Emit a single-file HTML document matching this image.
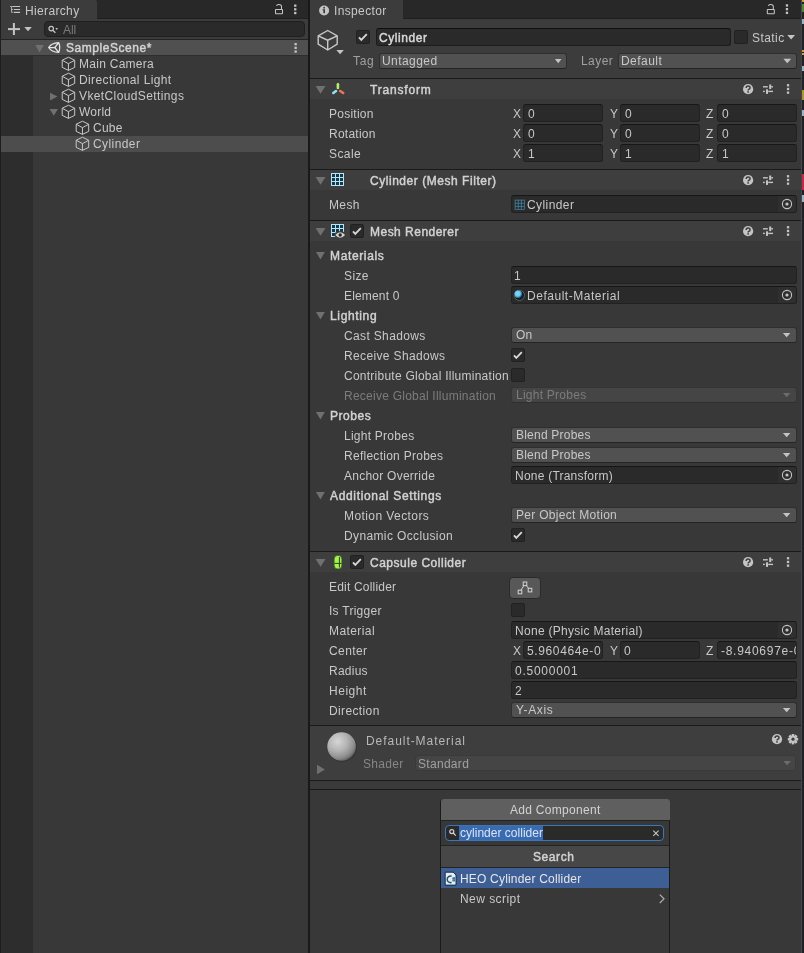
<!DOCTYPE html>
<html><head><meta charset="utf-8"><style>
html,body{margin:0;padding:0;width:804px;height:953px;overflow:hidden;background:#383838}
body>div,body>svg{position:absolute}
div div{position:absolute}
.t{position:absolute;will-change:transform;font-family:"Liberation Sans",sans-serif;font-size:12px;line-height:16px;white-space:pre}
</style></head><body>
<div style="left:0px;top:0px;width:804px;height:953px;background:#383838;"></div>
<div style="left:0px;top:0px;width:308px;height:19px;background:#282828;"></div>
<div style="left:1px;top:0px;width:96px;height:19px;background:#3c3c3c;border-radius:0 2px 0 0"></div>
<div style="left:0px;top:19px;width:308px;height:934px;background:#383838;"></div>
<div style="left:0px;top:0px;width:1px;height:953px;background:#1e1e1e;"></div>
<div style="left:1px;top:56px;width:32px;height:897px;background:#2d2d2d;"></div>
<div style="left:1px;top:19px;width:307px;height:21px;background:#3c3c3c;"></div>
<div style="left:97px;top:18px;width:211px;height:1px;background:#1f1f1f;"></div>
<div style="left:0px;top:39px;width:308px;height:1px;background:#232323;"></div>
<div style="left:44px;top:21px;width:261px;height:16px;background:#2a2a2a;border:1px solid #1f1f1f;border-radius:4px;box-sizing:border-box"></div>
<div class="t" style="left:62.9px;top:21.5px;letter-spacing:-0.1px;color:#7a7a7a;">All</div>
<div style="left:1px;top:40px;width:307px;height:15px;background:#505050;"></div>
<div style="left:1px;top:55px;width:307px;height:1px;background:#2e2e2e;"></div>
<div style="left:1px;top:136px;width:307px;height:16px;background:#4d4d4d;"></div>
<div class="t" style="left:25.0px;top:3px;letter-spacing:0.35px;color:#c8c8c8;">Hierarchy</div>
<div class="t" style="left:65.8px;top:40.2px;letter-spacing:0.55px;color:#d2d2d2;-webkit-text-stroke:0.45px #d2d2d2;">SampleScene*</div>
<div class="t" style="left:79.0px;top:56px;letter-spacing:0.27px;color:#c8c8c8;">Main Camera</div>
<div class="t" style="left:79.0px;top:72px;letter-spacing:0.385px;color:#c8c8c8;">Directional Light</div>
<div class="t" style="left:79.0px;top:88px;letter-spacing:0.386px;color:#c8c8c8;">VketCloudSettings</div>
<div class="t" style="left:79.0px;top:104px;letter-spacing:0.215px;color:#c8c8c8;">World</div>
<div class="t" style="left:93.0px;top:120px;letter-spacing:0.25px;color:#c8c8c8;">Cube</div>
<div class="t" style="left:93.0px;top:136px;letter-spacing:0.41px;color:#c8c8c8;">Cylinder</div>
<div style="left:308px;top:0px;width:2px;height:953px;background:#191919;"></div>
<div style="left:310px;top:0px;width:491px;height:19px;background:#282828;"></div>
<div style="left:310px;top:0px;width:93px;height:19px;background:#3c3c3c;"></div>
<div style="left:403px;top:0px;width:398px;height:18px;background:#282828;"></div>
<div style="left:310px;top:19px;width:491px;height:934px;background:#383838;"></div>
<div style="left:310px;top:19px;width:491px;height:59px;background:#3c3c3c;"></div>
<div style="left:403px;top:18px;width:398px;height:1px;background:#1f1f1f;"></div>
<div class="t" style="left:333.7px;top:3px;letter-spacing:0.36px;color:#c8c8c8;">Inspector</div>
<div style="left:801px;top:0px;width:1px;height:953px;background:#474747;"></div>
<div style="left:802px;top:0px;width:2px;height:953px;background:#1f2124;"></div>
<div style="left:802px;top:0px;width:2px;height:2px;background:#c8a040;"></div>
<div style="left:802px;top:4px;width:2px;height:8px;background:#4c8a3c;"></div>
<div style="left:802px;top:19px;width:2px;height:5px;background:#9ab4c4;"></div>
<div style="left:802px;top:50px;width:2px;height:1.5px;background:#c8a040;"></div>
<div style="left:802px;top:53px;width:2px;height:1.5px;background:#c8a040;"></div>
<div style="left:802px;top:66px;width:2px;height:5px;background:#9ab4c4;"></div>
<div style="left:802px;top:90px;width:2px;height:10px;background:#a89a30;"></div>
<div style="left:802px;top:110px;width:2px;height:6px;background:#9ab4c4;"></div>
<div style="left:802px;top:174px;width:2px;height:16px;background:#c8284a;"></div>
<div style="left:802px;top:195px;width:2px;height:7px;background:#9ab4c4;"></div>
<div style="left:356px;top:30px;width:14px;height:14px;background:#2a2a2a;border:1px solid #212121;border-radius:2px;box-sizing:border-box"></div>
<div style="left:376px;top:28px;width:355px;height:18px;background:#2a2a2a;border:1px solid #1c1c1c;border-top-color:#101010;border-radius:3px;box-sizing:border-box"></div>
<div class="t" style="left:378.90000000000003px;top:30px;letter-spacing:0.57px;color:#d8d8d8;-webkit-text-stroke:0.45px #d8d8d8;">Cylinder</div>
<div style="left:734px;top:30px;width:14px;height:14px;background:#2a2a2a;border:1px solid #212121;border-radius:2px;box-sizing:border-box"></div>
<div class="t" style="left:751.9px;top:29.799999999999997px;letter-spacing:0.43px;color:#c8c8c8;">Static</div>
<div class="t" style="left:352.7px;top:53px;letter-spacing:0.7px;color:#a0a0a0;">Tag</div>
<div style="left:379px;top:53px;width:188px;height:16px;background:#515151;border:1px solid #2e2e2e;border-bottom-color:#242424;border-radius:3px;box-sizing:border-box"></div>
<div class="t" style="left:381.8px;top:53px;letter-spacing:0.43px;color:#c8c8c8;">Untagged</div>
<div class="t" style="left:580.9px;top:53px;letter-spacing:0.43px;color:#a0a0a0;">Layer</div>
<div style="left:618px;top:53px;width:179px;height:16px;background:#515151;border:1px solid #2e2e2e;border-bottom-color:#242424;border-radius:3px;box-sizing:border-box"></div>
<div class="t" style="left:621.1px;top:53px;letter-spacing:0.45px;color:#c8c8c8;">Default</div>
<div style="left:310px;top:78px;width:491px;height:1px;background:#1a1a1a;"></div>
<div style="left:310px;top:79px;width:491px;height:20px;background:#3e3e3e;"></div>
<div class="t" style="left:369.90000000000003px;top:82px;letter-spacing:0.82px;color:#d2d2d2;-webkit-text-stroke:0.45px #d2d2d2;">Transform</div>
<div class="t" style="left:329.1px;top:106px;letter-spacing:0.25px;color:#c8c8c8;">Position</div>
<div class="t" style="left:512.7px;top:106px;letter-spacing:0px;color:#c8c8c8;">X</div>
<div style="left:523px;top:104px;width:80px;height:18px;background:#2a2a2a;border:1px solid #212121;border-top-color:#171717;border-radius:3px;box-sizing:border-box"></div>
<div class="t" style="left:527.7px;top:106px;letter-spacing:0px;color:#c8c8c8;">0</div>
<div class="t" style="left:609.6px;top:106px;letter-spacing:0px;color:#c8c8c8;">Y</div>
<div style="left:620px;top:104px;width:80px;height:18px;background:#2a2a2a;border:1px solid #212121;border-top-color:#171717;border-radius:3px;box-sizing:border-box"></div>
<div class="t" style="left:624.7px;top:106px;letter-spacing:0px;color:#c8c8c8;">0</div>
<div class="t" style="left:705.8px;top:106px;letter-spacing:0px;color:#c8c8c8;">Z</div>
<div style="left:717px;top:104px;width:80px;height:18px;background:#2a2a2a;border:1px solid #212121;border-top-color:#171717;border-radius:3px;box-sizing:border-box"></div>
<div class="t" style="left:721.7px;top:106px;letter-spacing:0px;color:#c8c8c8;">0</div>
<div class="t" style="left:329.1px;top:126px;letter-spacing:0.25px;color:#c8c8c8;">Rotation</div>
<div class="t" style="left:512.7px;top:126px;letter-spacing:0px;color:#c8c8c8;">X</div>
<div style="left:523px;top:124px;width:80px;height:18px;background:#2a2a2a;border:1px solid #212121;border-top-color:#171717;border-radius:3px;box-sizing:border-box"></div>
<div class="t" style="left:527.7px;top:126px;letter-spacing:0px;color:#c8c8c8;">0</div>
<div class="t" style="left:609.6px;top:126px;letter-spacing:0px;color:#c8c8c8;">Y</div>
<div style="left:620px;top:124px;width:80px;height:18px;background:#2a2a2a;border:1px solid #212121;border-top-color:#171717;border-radius:3px;box-sizing:border-box"></div>
<div class="t" style="left:624.7px;top:126px;letter-spacing:0px;color:#c8c8c8;">0</div>
<div class="t" style="left:705.8px;top:126px;letter-spacing:0px;color:#c8c8c8;">Z</div>
<div style="left:717px;top:124px;width:80px;height:18px;background:#2a2a2a;border:1px solid #212121;border-top-color:#171717;border-radius:3px;box-sizing:border-box"></div>
<div class="t" style="left:721.7px;top:126px;letter-spacing:0px;color:#c8c8c8;">0</div>
<div class="t" style="left:329.1px;top:146px;letter-spacing:0.434px;color:#c8c8c8;">Scale</div>
<div class="t" style="left:512.7px;top:146px;letter-spacing:0px;color:#c8c8c8;">X</div>
<div style="left:523px;top:144px;width:80px;height:18px;background:#2a2a2a;border:1px solid #212121;border-top-color:#171717;border-radius:3px;box-sizing:border-box"></div>
<div class="t" style="left:527.7px;top:146px;letter-spacing:0px;color:#c8c8c8;">1</div>
<div class="t" style="left:609.6px;top:146px;letter-spacing:0px;color:#c8c8c8;">Y</div>
<div style="left:620px;top:144px;width:80px;height:18px;background:#2a2a2a;border:1px solid #212121;border-top-color:#171717;border-radius:3px;box-sizing:border-box"></div>
<div class="t" style="left:624.7px;top:146px;letter-spacing:0px;color:#c8c8c8;">1</div>
<div class="t" style="left:705.8px;top:146px;letter-spacing:0px;color:#c8c8c8;">Z</div>
<div style="left:717px;top:144px;width:80px;height:18px;background:#2a2a2a;border:1px solid #212121;border-top-color:#171717;border-radius:3px;box-sizing:border-box"></div>
<div class="t" style="left:721.7px;top:146px;letter-spacing:0px;color:#c8c8c8;">1</div>
<div style="left:310px;top:169px;width:491px;height:1px;background:#1a1a1a;"></div>
<div style="left:310px;top:170px;width:491px;height:20px;background:#3e3e3e;"></div>
<div class="t" style="left:369.90000000000003px;top:173px;letter-spacing:0.54px;color:#d2d2d2;-webkit-text-stroke:0.45px #d2d2d2;">Cylinder (Mesh Filter)</div>
<div class="t" style="left:329.1px;top:197px;letter-spacing:0.36px;color:#c8c8c8;">Mesh</div>
<div style="left:511px;top:195px;width:286px;height:18px;background:#2a2a2a;border:1px solid #212121;border-top-color:#171717;border-radius:3px;box-sizing:border-box"></div>
<div style="left:777.5px;top:196px;width:18.5px;height:16px;background:#2f2f2f;border-radius:0 2px 2px 0"></div>
<div class="t" style="left:526.9px;top:197px;letter-spacing:0.41px;color:#c8c8c8;">Cylinder</div>
<div style="left:310px;top:220px;width:491px;height:1px;background:#1a1a1a;"></div>
<div style="left:310px;top:221px;width:491px;height:20px;background:#3e3e3e;"></div>
<div class="t" style="left:369.90000000000003px;top:224px;letter-spacing:0.48px;color:#d2d2d2;-webkit-text-stroke:0.45px #d2d2d2;">Mesh Renderer</div>
<div style="left:350px;top:224px;width:14px;height:14px;background:#2a2a2a;border:1px solid #212121;border-radius:2px;box-sizing:border-box"></div>
<div class="t" style="left:330.20000000000005px;top:248px;letter-spacing:0.64px;color:#d2d2d2;-webkit-text-stroke:0.45px #d2d2d2;">Materials</div>
<div class="t" style="left:343.9px;top:268px;letter-spacing:0.389px;color:#c8c8c8;">Size</div>
<div class="t" style="left:343.9px;top:288px;letter-spacing:0.163px;color:#c8c8c8;">Element 0</div>
<div class="t" style="left:330.20000000000005px;top:308px;letter-spacing:0.65px;color:#d2d2d2;-webkit-text-stroke:0.45px #d2d2d2;">Lighting</div>
<div class="t" style="left:343.9px;top:328px;letter-spacing:0.352px;color:#c8c8c8;">Cast Shadows</div>
<div class="t" style="left:343.9px;top:348px;letter-spacing:0.362px;color:#c8c8c8;">Receive Shadows</div>
<div class="t" style="left:343.9px;top:368px;letter-spacing:0.249px;color:#c8c8c8;">Contribute Global Illumination</div>
<div class="t" style="left:343.9px;top:388px;letter-spacing:0.244px;color:#7c7c7c;">Receive Global Illumination</div>
<div class="t" style="left:330.20000000000005px;top:408px;letter-spacing:0.55px;color:#d2d2d2;-webkit-text-stroke:0.45px #d2d2d2;">Probes</div>
<div class="t" style="left:343.9px;top:428px;letter-spacing:0.251px;color:#c8c8c8;">Light Probes</div>
<div class="t" style="left:343.9px;top:448px;letter-spacing:0.269px;color:#c8c8c8;">Reflection Probes</div>
<div class="t" style="left:343.9px;top:468px;letter-spacing:0.248px;color:#c8c8c8;">Anchor Override</div>
<div class="t" style="left:330.20000000000005px;top:488px;letter-spacing:0.66px;color:#d2d2d2;-webkit-text-stroke:0.45px #d2d2d2;">Additional Settings</div>
<div class="t" style="left:343.9px;top:508px;letter-spacing:0.423px;color:#c8c8c8;">Motion Vectors</div>
<div class="t" style="left:343.9px;top:528px;letter-spacing:0.37px;color:#c8c8c8;">Dynamic Occlusion</div>
<div style="left:511px;top:266px;width:286px;height:18px;background:#2a2a2a;border:1px solid #212121;border-top-color:#171717;border-radius:3px;box-sizing:border-box"></div>
<div class="t" style="left:514.3px;top:268px;letter-spacing:0px;color:#c8c8c8;">1</div>
<div style="left:511px;top:286px;width:286px;height:18px;background:#2a2a2a;border:1px solid #212121;border-top-color:#171717;border-radius:3px;box-sizing:border-box"></div>
<div style="left:777.5px;top:287px;width:18.5px;height:16px;background:#2f2f2f;border-radius:0 2px 2px 0"></div>
<div class="t" style="left:526.9px;top:288px;letter-spacing:0.525px;color:#c8c8c8;">Default-Material</div>
<div style="left:511px;top:327px;width:286px;height:16px;background:#515151;border:1px solid #2e2e2e;border-bottom-color:#242424;border-radius:3px;box-sizing:border-box"></div>
<div class="t" style="left:515.8px;top:327px;letter-spacing:0.092px;color:#c8c8c8;">On</div>
<div style="left:511px;top:348px;width:14px;height:14px;background:#2a2a2a;border:1px solid #212121;border-radius:2px;box-sizing:border-box"></div>
<div style="left:511px;top:368px;width:14px;height:14px;background:#2a2a2a;border:1px solid #212121;border-radius:2px;box-sizing:border-box"></div>
<div style="left:511px;top:387px;width:286px;height:16px;background:#454545;border:1px solid #353535;border-bottom-color:#2e2e2e;border-radius:3px;box-sizing:border-box"></div>
<div class="t" style="left:515.8px;top:387px;letter-spacing:0.251px;color:#7c7c7c;">Light Probes</div>
<div style="left:511px;top:427px;width:286px;height:16px;background:#515151;border:1px solid #2e2e2e;border-bottom-color:#242424;border-radius:3px;box-sizing:border-box"></div>
<div class="t" style="left:515.8px;top:427px;letter-spacing:0.221px;color:#c8c8c8;">Blend Probes</div>
<div style="left:511px;top:447px;width:286px;height:16px;background:#515151;border:1px solid #2e2e2e;border-bottom-color:#242424;border-radius:3px;box-sizing:border-box"></div>
<div class="t" style="left:515.8px;top:447px;letter-spacing:0.221px;color:#c8c8c8;">Blend Probes</div>
<div style="left:511px;top:466px;width:286px;height:18px;background:#2a2a2a;border:1px solid #212121;border-top-color:#171717;border-radius:3px;box-sizing:border-box"></div>
<div style="left:777.5px;top:467px;width:18.5px;height:16px;background:#2f2f2f;border-radius:0 2px 2px 0"></div>
<div class="t" style="left:514.9px;top:468px;letter-spacing:0.228px;color:#c8c8c8;">None (Transform)</div>
<div style="left:511px;top:507px;width:286px;height:16px;background:#515151;border:1px solid #2e2e2e;border-bottom-color:#242424;border-radius:3px;box-sizing:border-box"></div>
<div class="t" style="left:515.8px;top:507px;letter-spacing:0.297px;color:#c8c8c8;">Per Object Motion</div>
<div style="left:511px;top:528px;width:14px;height:14px;background:#2a2a2a;border:1px solid #212121;border-radius:2px;box-sizing:border-box"></div>
<div style="left:310px;top:551px;width:491px;height:1px;background:#1a1a1a;"></div>
<div style="left:310px;top:552px;width:491px;height:20px;background:#3e3e3e;"></div>
<div class="t" style="left:369.90000000000003px;top:555px;letter-spacing:0.51px;color:#d2d2d2;-webkit-text-stroke:0.45px #d2d2d2;">Capsule Collider</div>
<div style="left:350px;top:555px;width:14px;height:14px;background:#2a2a2a;border:1px solid #212121;border-radius:2px;box-sizing:border-box"></div>
<div class="t" style="left:328.9px;top:579px;letter-spacing:0.192px;color:#c8c8c8;">Edit Collider</div>
<div style="left:509px;top:577px;width:32px;height:22px;background:#585858;border:1px solid #2a2a2a;border-radius:4px;box-sizing:border-box"></div>
<div class="t" style="left:328.9px;top:603px;letter-spacing:0.268px;color:#c8c8c8;">Is Trigger</div>
<div style="left:511px;top:603px;width:14px;height:14px;background:#2a2a2a;border:1px solid #212121;border-radius:2px;box-sizing:border-box"></div>
<div class="t" style="left:328.9px;top:623px;letter-spacing:0.414px;color:#c8c8c8;">Material</div>
<div style="left:511px;top:621px;width:286px;height:18px;background:#2a2a2a;border:1px solid #212121;border-top-color:#171717;border-radius:3px;box-sizing:border-box"></div>
<div style="left:777.5px;top:622px;width:18.5px;height:16px;background:#2f2f2f;border-radius:0 2px 2px 0"></div>
<div class="t" style="left:514.9px;top:623px;letter-spacing:0.288px;color:#c8c8c8;">None (Physic Material)</div>
<div class="t" style="left:328.9px;top:643px;letter-spacing:0.395px;color:#c8c8c8;">Center</div>
<div class="t" style="left:513.1px;top:643px;letter-spacing:0px;color:#c8c8c8;">X</div>
<div style="left:523px;top:641px;width:80px;height:18px;background:#2a2a2a;border:1px solid #212121;border-top-color:#171717;border-radius:3px;box-sizing:border-box"></div>
<div style="left:524px;top:641px;width:78px;height:18px;overflow:hidden">
<div class="t" style="left:3.0px;top:2px;letter-spacing:0.62px;color:#c8c8c8">5.960464e-0</div></div>
<div class="t" style="left:610.0px;top:643px;letter-spacing:0px;color:#c8c8c8;">Y</div>
<div style="left:620px;top:641px;width:80px;height:18px;background:#2a2a2a;border:1px solid #212121;border-top-color:#171717;border-radius:3px;box-sizing:border-box"></div>
<div style="left:621px;top:641px;width:78px;height:18px;overflow:hidden">
<div class="t" style="left:3.0px;top:2px;letter-spacing:0.72px;color:#c8c8c8">0</div></div>
<div class="t" style="left:705.8px;top:643px;letter-spacing:0px;color:#c8c8c8;">Z</div>
<div style="left:717px;top:641px;width:80px;height:18px;background:#2a2a2a;border:1px solid #212121;border-top-color:#171717;border-radius:3px;box-sizing:border-box"></div>
<div style="left:718px;top:641px;width:78px;height:18px;overflow:hidden">
<div class="t" style="left:2.6px;top:2px;letter-spacing:0.72px;color:#c8c8c8">-8.940697e-0</div></div>
<div class="t" style="left:328.9px;top:663px;letter-spacing:0.24px;color:#c8c8c8;">Radius</div>
<div style="left:511px;top:661px;width:286px;height:18px;background:#2a2a2a;border:1px solid #212121;border-top-color:#171717;border-radius:3px;box-sizing:border-box"></div>
<div class="t" style="left:514.7px;top:663px;letter-spacing:0.74px;color:#c8c8c8;">0.5000001</div>
<div class="t" style="left:328.9px;top:683px;letter-spacing:0.519px;color:#c8c8c8;">Height</div>
<div style="left:511px;top:681px;width:286px;height:18px;background:#2a2a2a;border:1px solid #212121;border-top-color:#171717;border-radius:3px;box-sizing:border-box"></div>
<div class="t" style="left:514.7px;top:683px;letter-spacing:0px;color:#c8c8c8;">2</div>
<div class="t" style="left:328.9px;top:703px;letter-spacing:0.371px;color:#c8c8c8;">Direction</div>
<div style="left:511px;top:702px;width:286px;height:16px;background:#515151;border:1px solid #2e2e2e;border-bottom-color:#242424;border-radius:3px;box-sizing:border-box"></div>
<div class="t" style="left:515.8px;top:702px;letter-spacing:0.654px;color:#c8c8c8;">Y-Axis</div>
<div style="left:310px;top:725px;width:491px;height:1px;background:#1a1a1a;"></div>
<div style="left:310px;top:726px;width:491px;height:54px;background:#3e3e3e;"></div>
<div class="t" style="left:366.0px;top:733px;letter-spacing:0.95px;color:#b8b8b8;">Default-Material</div>
<div class="t" style="left:363.4px;top:756px;letter-spacing:0.3px;color:#868686;">Shader</div>
<div style="left:415px;top:755px;width:381px;height:16px;background:#454545;border:1px solid #3a3a3a;border-radius:3px;box-sizing:border-box"></div>
<div class="t" style="left:418.1px;top:756px;letter-spacing:0.3px;color:#a0a0a0;">Standard</div>
<div style="left:310px;top:780px;width:491px;height:1px;background:#1a1a1a;"></div>
<div style="left:310px;top:781px;width:491px;height:8px;background:#3a3a3a;"></div>
<div style="left:310px;top:789px;width:491px;height:1px;background:#1a1a1a;"></div>
<div style="left:440px;top:799px;width:230px;height:165px;background:#383838;border:1px solid #1a1a1a;border-top:none;border-radius:4px 4px 0 0;box-sizing:border-box"></div>
<div style="left:440.5px;top:799px;width:229px;height:21px;background:#5f5f5f;border-radius:3px 3px 0 0"></div>
<div style="left:441px;top:820px;width:228px;height:1px;background:#232323;"></div>
<div style="left:441px;top:821px;width:228px;height:24px;background:#383838;"></div>
<div style="left:445px;top:825px;width:219px;height:16px;background:#2a2a2a;border:1px solid #3b77b8;border-radius:4px;box-sizing:border-box"></div>
<div style="left:459px;top:826px;width:84px;height:14px;background:#3a6bb0;"></div>
<div class="t" style="left:459.7px;top:825px;letter-spacing:0.017px;color:#d8e4f4;">cylinder collider</div>
<div style="left:441px;top:845px;width:228px;height:1px;background:#232323;"></div>
<div style="left:441px;top:846px;width:228px;height:21px;background:#474747;"></div>
<div style="left:441px;top:867px;width:228px;height:1px;background:#232323;"></div>
<div style="left:441px;top:868px;width:228px;height:20px;background:#3e5f96;"></div>
<div class="t" style="left:510.3px;top:802px;letter-spacing:0.297px;color:#d2d2d2;">Add Component</div>
<div class="t" style="left:533.0px;top:849px;letter-spacing:0.58px;color:#d2d2d2;-webkit-text-stroke:0.45px #d2d2d2;">Search</div>
<div class="t" style="left:460.0px;top:871px;letter-spacing:0.192px;color:#e6e6e6;">HEO Cylinder Collider</div>
<div class="t" style="left:460.0px;top:891px;letter-spacing:0.448px;color:#c8c8c8;">New script</div>
<svg style="position:absolute;left:0;top:0" width="804" height="953" viewBox="0 0 804 953"><path d="M12.2,6.5 H20.1 M13.7,9.5 H20.1 M13.7,12.4 H20.1" stroke="#c4c4c4" stroke-width="1.1"/><path d="M11.6,6.5 V12.4 M10.2,6.5 H11.6 M11.6,9.5 H12.8 M11.6,12.4 H12.8" stroke="#c4c4c4" stroke-width="0.9"/><rect x="275.5" y="9.5" width="7" height="4.2" fill="none" stroke="#c4c4c4" stroke-width="1.05" rx="0.5"/><path d="M276.4,5.6 Q277.4,4.4 279.1,4.4 Q281.5,4.4 281.5,6.6 L281.5,9.3" fill="none" stroke="#c4c4c4" stroke-width="1.05"/><rect x="294.1" y="4.5" width="2.3" height="2.3" fill="#c4c4c4"/><rect x="294.1" y="8.2" width="2.3" height="2.3" fill="#c4c4c4"/><rect x="294.1" y="11.9" width="2.3" height="2.3" fill="#c4c4c4"/><rect x="8" y="28.1" width="12" height="2" fill="#c4c4c4"/><rect x="12.9" y="23" width="2" height="12" fill="#c4c4c4"/><path d="M24.3,27 L31.8,27 L28.05,31.3 Z" fill="#c4c4c4"/><circle cx="51.2" cy="28.6" r="2.2" fill="none" stroke="#c4c4c4" stroke-width="1.2"/><path d="M52.8,30.2 L55.4,32.7" stroke="#c4c4c4" stroke-width="1.3"/><path d="M55.3,28.1 L58.099999999999994,28.1 L56.699999999999996,29.900000000000002 Z" fill="#c4c4c4"/><path d="M35.4,45.1 L43.8,45.1 L39.6,52.4 Z" fill="#707070"/><path d="M48.6,47.5 Q51.6,43 58.7,42.6 Q60.8,47.5 58.7,52.4 Q51.6,52 48.6,47.5 Z M48.6,47.5 L54.8,47.5 L58.7,42.6 M54.8,47.5 L58.7,52.4" fill="none" stroke="#e6e6e6" stroke-width="1.25" stroke-linejoin="round"/><rect x="294.5" y="43.0" width="2.3" height="2.3" fill="#c4c4c4"/><rect x="294.5" y="46.7" width="2.3" height="2.3" fill="#c4c4c4"/><rect x="294.5" y="50.4" width="2.3" height="2.3" fill="#c4c4c4"/><path d="M68.45,57.2 L74.7,60.236000000000004 L74.7,67.364 L68.45,70.4 L62.2,67.364 L62.2,60.236000000000004 Z M62.2,60.236000000000004 L68.45,63.668000000000006 L74.7,60.236000000000004 M68.45,63.668000000000006 L68.45,70.4" fill="none" stroke="#c8c8c8" stroke-width="1.0" stroke-linejoin="round"/><path d="M68.45,73.2 L74.7,76.236 L74.7,83.364 L68.45,86.4 L62.2,83.364 L62.2,76.236 Z M62.2,76.236 L68.45,79.668 L74.7,76.236 M68.45,79.668 L68.45,86.4" fill="none" stroke="#c8c8c8" stroke-width="1.0" stroke-linejoin="round"/><path d="M68.45,89.2 L74.7,92.236 L74.7,99.364 L68.45,102.4 L62.2,99.364 L62.2,92.236 Z M62.2,92.236 L68.45,95.668 L74.7,92.236 M68.45,95.668 L68.45,102.4" fill="none" stroke="#c8c8c8" stroke-width="1.0" stroke-linejoin="round"/><path d="M68.45,105.2 L74.7,108.236 L74.7,115.364 L68.45,118.4 L62.2,115.364 L62.2,108.236 Z M62.2,108.236 L68.45,111.668 L74.7,108.236 M68.45,111.668 L68.45,118.4" fill="none" stroke="#c8c8c8" stroke-width="1.0" stroke-linejoin="round"/><path d="M82.45,121.2 L88.7,124.236 L88.7,131.364 L82.45,134.4 L76.2,131.364 L76.2,124.236 Z M76.2,124.236 L82.45,127.668 L88.7,124.236 M82.45,127.668 L82.45,134.4" fill="none" stroke="#c8c8c8" stroke-width="1.0" stroke-linejoin="round"/><path d="M82.45,137.2 L88.7,140.236 L88.7,147.36399999999998 L82.45,150.39999999999998 L76.2,147.36399999999998 L76.2,140.236 Z M76.2,140.236 L82.45,143.66799999999998 L88.7,140.236 M82.45,143.66799999999998 L82.45,150.39999999999998" fill="none" stroke="#c8c8c8" stroke-width="1.0" stroke-linejoin="round"/><path d="M50,92.8 L57.5,96.6 L50,100.39999999999999 Z" fill="#707070"/><path d="M49.6,109.1 L57.900000000000006,109.1 L53.75,115.69999999999999 Z" fill="#707070"/><circle cx="324.1" cy="10.5" r="5" fill="#c4c4c4"/><rect x="323.3" y="9.2" width="1.7" height="4" fill="#3c3c3c"/><rect x="323.3" y="6.9" width="1.7" height="1.6" fill="#3c3c3c"/><rect x="322.5" y="9.2" width="1" height="1" fill="#3c3c3c"/><rect x="767.3" y="9.5" width="7" height="4.2" fill="none" stroke="#c4c4c4" stroke-width="1.05" rx="0.5"/><path d="M768.1999999999999,5.6 Q769.1999999999999,4.4 770.9,4.4 Q773.3,4.4 773.3,6.6 L773.3,9.3" fill="none" stroke="#c4c4c4" stroke-width="1.05"/><rect x="785.8" y="4.3" width="2.3" height="2.3" fill="#c4c4c4"/><rect x="785.8" y="8.0" width="2.3" height="2.3" fill="#c4c4c4"/><rect x="785.8" y="11.7" width="2.3" height="2.3" fill="#c4c4c4"/><path d="M327.7,30.5 L337.2,35.765 L337.2,44.15 L327.7,50.0 L318.2,44.15 L318.2,35.765 Z M318.2,35.765 L327.7,40.25 L337.2,35.765 M327.7,40.25 L327.7,50.0" fill="none" stroke="#c8c8c8" stroke-width="1.4" stroke-linejoin="round"/><path d="M336.4,50 L343.79999999999995,50 L340.09999999999997,54.3 Z" fill="#c4c4c4"/><path d="M359,37.4 L361.3,39.9 L366.8,34.2" fill="none" stroke="#d8d8d8" stroke-width="1.8"/><path d="M787.3,34.9 L795.0,34.9 L791.15,39.4 Z" fill="#c4c4c4"/><path d="M554.9,58.9 L561.5,58.9 L558.1999999999999,63.3 Z" fill="#c4c4c4"/><path d="M783.4,58.8 L791.1999999999999,58.8 L787.3,63.3 Z" fill="#c4c4c4"/><path d="M315.6,86 L325.5,86 L320.55,93.7 Z" fill="#707070"/><path d="M337.9,84.3 L337.9,88" stroke="#b8ec68" stroke-width="2.6" stroke-linecap="round"/><path d="M333.3,93 L336,91" stroke="#90e0f4" stroke-width="2.6" stroke-linecap="round"/><path d="M340.2,91 L343.2,93" stroke="#ee7656" stroke-width="2.6" stroke-linecap="round"/><circle cx="748.1" cy="89.2" r="5.1" fill="#c4c4c4"/><path d="M746.2,87.9 Q746.2,85.9 748.1,85.9 Q750.1,85.9 750.1,87.7 Q750.1,88.8 748.7,89.4 Q748.1,89.7 748.1,90.4" fill="none" stroke="#3e3e3e" stroke-width="1.5"/><rect x="747.3000000000001" y="91.2" width="1.6" height="1.5" fill="#3e3e3e"/><rect x="763" y="86.1" width="4.8" height="1.4" fill="#c4c4c4"/><rect x="771.2" y="86.1" width="1.8" height="1.4" fill="#c4c4c4"/><rect x="769.2" y="84.5" width="2" height="4.6" fill="#c4c4c4"/><rect x="763" y="90.7" width="1.8" height="1.4" fill="#c4c4c4"/><rect x="768.2" y="90.7" width="4.8" height="1.4" fill="#c4c4c4"/><rect x="766" y="89.3" width="2" height="4.6" fill="#c4c4c4"/><rect x="786.9" y="84.1" width="2.3" height="2.3" fill="#c4c4c4"/><rect x="786.9" y="87.8" width="2.3" height="2.3" fill="#c4c4c4"/><rect x="786.9" y="91.5" width="2.3" height="2.3" fill="#c4c4c4"/><path d="M315.6,177 L325.5,177 L320.55,184.7 Z" fill="#707070"/><rect x="331" y="173" width="13" height="13" fill="#b8e4f8"/><rect x="332" y="174" width="3" height="3" fill="#123a48"/><rect x="332" y="178" width="3" height="3" fill="#123a48"/><rect x="332" y="182" width="3" height="3" fill="#123a48"/><rect x="336" y="174" width="3" height="3" fill="#123a48"/><rect x="336" y="178" width="3" height="3" fill="#123a48"/><rect x="336" y="182" width="3" height="3" fill="#123a48"/><rect x="340" y="174" width="3" height="3" fill="#123a48"/><rect x="340" y="178" width="3" height="3" fill="#123a48"/><rect x="340" y="182" width="3" height="3" fill="#123a48"/><circle cx="748.1" cy="180.2" r="5.1" fill="#c4c4c4"/><path d="M746.2,178.89999999999998 Q746.2,176.89999999999998 748.1,176.89999999999998 Q750.1,176.89999999999998 750.1,178.7 Q750.1,179.79999999999998 748.7,180.39999999999998 Q748.1,180.7 748.1,181.39999999999998" fill="none" stroke="#3e3e3e" stroke-width="1.5"/><rect x="747.3000000000001" y="182.2" width="1.6" height="1.5" fill="#3e3e3e"/><rect x="763" y="177.1" width="4.8" height="1.4" fill="#c4c4c4"/><rect x="771.2" y="177.1" width="1.8" height="1.4" fill="#c4c4c4"/><rect x="769.2" y="175.5" width="2" height="4.6" fill="#c4c4c4"/><rect x="763" y="181.7" width="1.8" height="1.4" fill="#c4c4c4"/><rect x="768.2" y="181.7" width="4.8" height="1.4" fill="#c4c4c4"/><rect x="766" y="180.3" width="2" height="4.6" fill="#c4c4c4"/><rect x="786.9" y="175.1" width="2.3" height="2.3" fill="#c4c4c4"/><rect x="786.9" y="178.79999999999998" width="2.3" height="2.3" fill="#c4c4c4"/><rect x="786.9" y="182.5" width="2.3" height="2.3" fill="#c4c4c4"/><rect x="514.7" y="199.7" width="10" height="10" fill="#4f8298"/><rect x="515.5" y="200.5" width="2.3" height="2.3" fill="#1c2e36"/><rect x="515.5" y="203.6" width="2.3" height="2.3" fill="#1c2e36"/><rect x="515.5" y="206.7" width="2.3" height="2.3" fill="#1c2e36"/><rect x="518.6" y="200.5" width="2.3" height="2.3" fill="#1c2e36"/><rect x="518.6" y="203.6" width="2.3" height="2.3" fill="#1c2e36"/><rect x="518.6" y="206.7" width="2.3" height="2.3" fill="#1c2e36"/><rect x="521.7" y="200.5" width="2.3" height="2.3" fill="#1c2e36"/><rect x="521.7" y="203.6" width="2.3" height="2.3" fill="#1c2e36"/><rect x="521.7" y="206.7" width="2.3" height="2.3" fill="#1c2e36"/><circle cx="787" cy="204" r="4.6" fill="none" stroke="#c4c4c4" stroke-width="1.1"/><circle cx="787" cy="204" r="1.6" fill="#c4c4c4"/><path d="M315.6,228 L325.5,228 L320.55,235.7 Z" fill="#707070"/><rect x="331" y="224" width="13" height="13" fill="#b8e4f8"/><rect x="332" y="225" width="3" height="3" fill="#123a48"/><rect x="332" y="229" width="3" height="3" fill="#123a48"/><rect x="332" y="233" width="3" height="3" fill="#123a48"/><rect x="336" y="225" width="3" height="3" fill="#123a48"/><rect x="336" y="229" width="3" height="3" fill="#123a48"/><rect x="336" y="233" width="3" height="3" fill="#123a48"/><rect x="340" y="225" width="3" height="3" fill="#123a48"/><rect x="340" y="229" width="3" height="3" fill="#123a48"/><rect x="340" y="233" width="3" height="3" fill="#123a48"/><ellipse cx="340.2" cy="235" rx="5.8" ry="3.9" fill="#3e3e3e"/><path d="M335.3,235 Q340.2,229.6 345.1,235 Q340.2,240.4 335.3,235 Z" fill="#d4d4cc"/><circle cx="340.2" cy="235" r="1.7" fill="#262626"/><path d="M353,231.4 L355.3,233.9 L360.8,228.2" fill="none" stroke="#d8d8d8" stroke-width="1.8"/><circle cx="748.1" cy="231.2" r="5.1" fill="#c4c4c4"/><path d="M746.2,229.89999999999998 Q746.2,227.89999999999998 748.1,227.89999999999998 Q750.1,227.89999999999998 750.1,229.7 Q750.1,230.79999999999998 748.7,231.39999999999998 Q748.1,231.7 748.1,232.39999999999998" fill="none" stroke="#3e3e3e" stroke-width="1.5"/><rect x="747.3000000000001" y="233.2" width="1.6" height="1.5" fill="#3e3e3e"/><rect x="763" y="228.1" width="4.8" height="1.4" fill="#c4c4c4"/><rect x="771.2" y="228.1" width="1.8" height="1.4" fill="#c4c4c4"/><rect x="769.2" y="226.5" width="2" height="4.6" fill="#c4c4c4"/><rect x="763" y="232.7" width="1.8" height="1.4" fill="#c4c4c4"/><rect x="768.2" y="232.7" width="4.8" height="1.4" fill="#c4c4c4"/><rect x="766" y="231.3" width="2" height="4.6" fill="#c4c4c4"/><rect x="786.9" y="226.1" width="2.3" height="2.3" fill="#c4c4c4"/><rect x="786.9" y="229.79999999999998" width="2.3" height="2.3" fill="#c4c4c4"/><rect x="786.9" y="233.5" width="2.3" height="2.3" fill="#c4c4c4"/><path d="M316,252 L324.9,252 L320.45,259.4 Z" fill="#707070"/><path d="M316,312 L324.9,312 L320.45,319.4 Z" fill="#707070"/><path d="M316,412 L324.9,412 L320.45,419.4 Z" fill="#707070"/><path d="M316,492 L324.9,492 L320.45,499.4 Z" fill="#707070"/><defs><radialGradient id="ms" cx="0.4" cy="0.4" r="0.6"><stop offset="0" stop-color="#8ad8f8"/><stop offset="0.55" stop-color="#6cc4ec"/><stop offset="1" stop-color="#0e2a3c"/></radialGradient></defs><circle cx="519.4" cy="295.4" r="5.1" fill="#0c1e2a" stroke="#5e6e70" stroke-width="0.8"/><circle cx="518.5" cy="294.4" r="4.1" fill="url(#ms)"/><circle cx="787" cy="295" r="4.6" fill="none" stroke="#c4c4c4" stroke-width="1.1"/><circle cx="787" cy="295" r="1.6" fill="#c4c4c4"/><path d="M782.9,333 L790.4,333 L786.65,337.2 Z" fill="#c4c4c4"/><path d="M514,355.4 L516.3,357.9 L521.8,352.2" fill="none" stroke="#d8d8d8" stroke-width="1.8"/><path d="M782.9,393 L790.4,393 L786.65,397.2 Z" fill="#6c6c6c"/><path d="M782.9,433 L790.4,433 L786.65,437.2 Z" fill="#c4c4c4"/><path d="M782.9,453 L790.4,453 L786.65,457.2 Z" fill="#c4c4c4"/><circle cx="787" cy="475" r="4.6" fill="none" stroke="#c4c4c4" stroke-width="1.1"/><circle cx="787" cy="475" r="1.6" fill="#c4c4c4"/><path d="M782.9,513 L790.4,513 L786.65,517.2 Z" fill="#c4c4c4"/><path d="M514,535.4 L516.3,537.9 L521.8,532.2" fill="none" stroke="#d8d8d8" stroke-width="1.8"/><path d="M315.6,559 L325.5,559 L320.55,566.7 Z" fill="#707070"/><rect x="334.1" y="555.3" width="7.8" height="13.8" rx="3.9" fill="#aaee55" stroke="#2c5a14" stroke-width="0.8"/><path d="M339.4,557 V567.5 M334.5,563.4 H341.5" stroke="#1e4a0c" stroke-width="1"/><path d="M353,562.4 L355.3,564.9 L360.8,559.2" fill="none" stroke="#d8d8d8" stroke-width="1.8"/><circle cx="748.1" cy="562.2" r="5.1" fill="#c4c4c4"/><path d="M746.2,560.9000000000001 Q746.2,558.9000000000001 748.1,558.9000000000001 Q750.1,558.9000000000001 750.1,560.7 Q750.1,561.8000000000001 748.7,562.4000000000001 Q748.1,562.7 748.1,563.4000000000001" fill="none" stroke="#3e3e3e" stroke-width="1.5"/><rect x="747.3000000000001" y="564.2" width="1.6" height="1.5" fill="#3e3e3e"/><rect x="763" y="559.1" width="4.8" height="1.4" fill="#c4c4c4"/><rect x="771.2" y="559.1" width="1.8" height="1.4" fill="#c4c4c4"/><rect x="769.2" y="557.5" width="2" height="4.6" fill="#c4c4c4"/><rect x="763" y="563.7" width="1.8" height="1.4" fill="#c4c4c4"/><rect x="768.2" y="563.7" width="4.8" height="1.4" fill="#c4c4c4"/><rect x="766" y="562.3" width="2" height="4.6" fill="#c4c4c4"/><rect x="786.9" y="557.1" width="2.3" height="2.3" fill="#c4c4c4"/><rect x="786.9" y="560.8000000000001" width="2.3" height="2.3" fill="#c4c4c4"/><rect x="786.9" y="564.5" width="2.3" height="2.3" fill="#c4c4c4"/><path d="M520,591.5 L525,584 L530,590" fill="none" stroke="#d4d4d4" stroke-width="1"/><rect x="518.2" y="590.2" width="3.6" height="3.6" fill="#585858" stroke="#d4d4d4" stroke-width="1"/><rect x="523.2" y="582.0" width="3.6" height="3.6" fill="#585858" stroke="#d4d4d4" stroke-width="1"/><rect x="528.2" y="588.3000000000001" width="3.6" height="3.6" fill="#585858" stroke="#d4d4d4" stroke-width="1"/><circle cx="787" cy="630" r="4.6" fill="none" stroke="#c4c4c4" stroke-width="1.1"/><circle cx="787" cy="630" r="1.6" fill="#c4c4c4"/><path d="M782.9,708 L790.4,708 L786.65,712.2 Z" fill="#c4c4c4"/><defs><radialGradient id="sph" cx="0.36" cy="0.32" r="0.75"><stop offset="0" stop-color="#d6d6d6"/><stop offset="0.45" stop-color="#b4b4b4"/><stop offset="0.8" stop-color="#8a8a8a"/><stop offset="1" stop-color="#555555"/></radialGradient></defs><circle cx="342.4" cy="747.4" r="14.6" fill="#2c2c2c" opacity="0.45"/><circle cx="341.6" cy="746.5" r="14.3" fill="url(#sph)"/><path d="M317,764.8 L324.9,769.5 L317,774.1999999999999 Z" fill="#707070"/><circle cx="777" cy="739.2" r="5.1" fill="#c4c4c4"/><path d="M775.1,737.9000000000001 Q775.1,735.9000000000001 777,735.9000000000001 Q779,735.9000000000001 779,737.7 Q779,738.8000000000001 777.6,739.4000000000001 Q777,739.7 777,740.4000000000001" fill="none" stroke="#3e3e3e" stroke-width="1.5"/><rect x="776.2" y="741.2" width="1.6" height="1.5" fill="#3e3e3e"/><g transform="translate(793,739.2)"><rect x="-1.3" y="-5.2" width="2.6" height="10.4" fill="#c4c4c4" transform="rotate(0)"/><rect x="-1.3" y="-5.2" width="2.6" height="10.4" fill="#c4c4c4" transform="rotate(45)"/><rect x="-1.3" y="-5.2" width="2.6" height="10.4" fill="#c4c4c4" transform="rotate(90)"/><rect x="-1.3" y="-5.2" width="2.6" height="10.4" fill="#c4c4c4" transform="rotate(135)"/><circle r="3.6" fill="#c4c4c4"/><circle r="1.6" fill="#3e3e3e"/></g><path d="M783.4,761 L790.9,761 L787.15,765.2 Z" fill="#6c6c6c"/><circle cx="451.8" cy="831.6" r="2" fill="none" stroke="#d0d0d0" stroke-width="1.2"/><path d="M453.2,833 L455.8,835.6" stroke="#d0d0d0" stroke-width="1.3"/><path d="M653.3,830.6 L658.6,835.9 M658.6,830.6 L653.3,835.9" stroke="#c4c4c4" stroke-width="1.1"/><path d="M445.2,872.2 H453.2 L456,875 V885.1 H445.2 Z" fill="#e6eef4" stroke="#0e1e30" stroke-width="0.9"/><path d="M451.6,876.2 A3.3,3.3 0 1 0 451.6,882.4" fill="none" stroke="#1a5472" stroke-width="1.5"/><path d="M452.2,878.3 H455.2 M452.2,880.2 H455.2 M453.2,877 V881.6 M454.3,877 V881.6" stroke="#1e6a98" stroke-width="0.85"/><path d="M659.8,894.6 L664,898.8 L659.8,903" fill="none" stroke="#b0b0b0" stroke-width="1.2"/></svg>
</body></html>
